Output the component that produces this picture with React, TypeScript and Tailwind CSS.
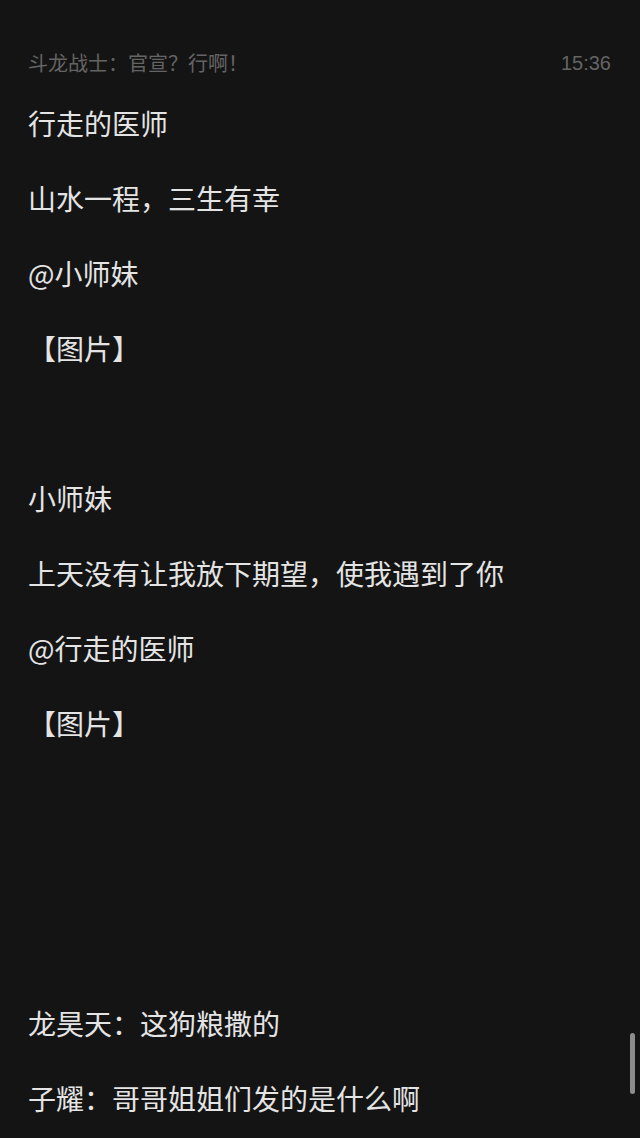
import React from 'react'

const lines: string[] = [
  '行走的医师',
  '山水一程，三生有幸',
  '@小师妹',
  '【图片】',
  '',
  '小师妹',
  '上天没有让我放下期望，使我遇到了你',
  '@行走的医师',
  '【图片】',
  '',
  '',
  '',
  '龙昊天：这狗粮撒的',
  '子耀：哥哥姐姐们发的是什么啊',
]

const App: React.FC = () => {
  return (
    <div
      className="relative w-[640px] h-[1138px] overflow-hidden bg-[#141414]"
      style={{ fontFamily: '"Noto Sans CJK SC", "Noto Sans", sans-serif' }}
    >
      <div className="flex items-center justify-between pl-[28px] pr-[29px] pt-[49px] h-[76px] text-[20px] text-[#646464]">
        <span>斗龙战士：官宣？行啊！</span>
        <span className="text-[20px]" style={{ fontFamily: '"Liberation Sans", sans-serif' }}>15:36</span>
      </div>

      <div className="flex flex-col pl-[28px] pt-[10px]">
        {lines.map((line, i) => (
          <p key={i} className="h-[75px] leading-[75px] text-[28px] text-[#e4e4e4] whitespace-nowrap">
            {line}
          </p>
        ))}
      </div>

      <div className="absolute right-[5px] top-[1033px] w-[5px] h-[61px] rounded-full bg-[#8c8c8c]" />
    </div>
  )
}

export default App
